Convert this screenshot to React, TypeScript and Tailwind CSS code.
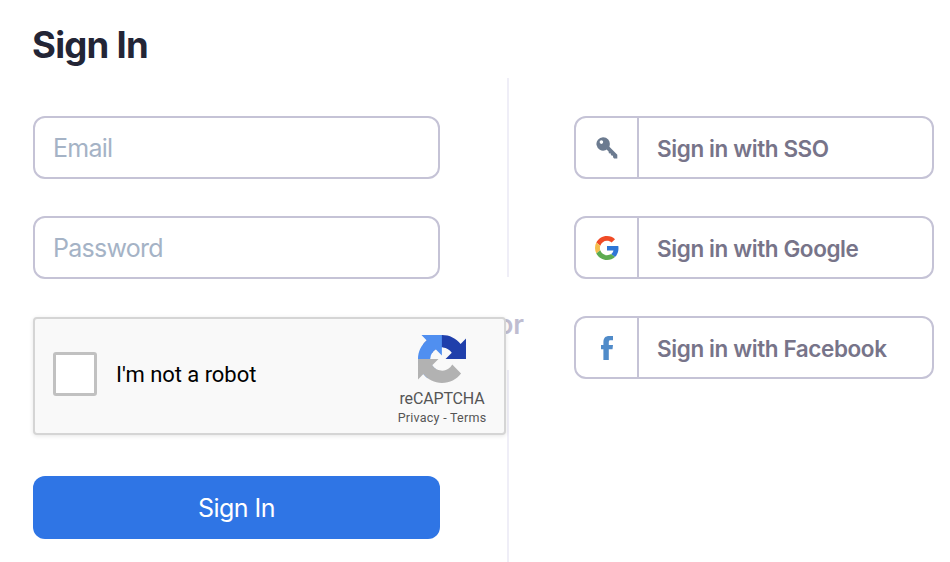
const KeyIcon = () => (
  <svg width="22" height="22" viewBox="0 0 22 22" fill="#6c7b90">
    <path
      fillRule="evenodd"
      d="M7 .2a6.7 6.7 0 1 0 2.4 13l1.2-.8 2 2 .3 1.8 1.8.3.3 1.8 1.9.4.3 1.8.9.9h3.2v-3.6l-7.9-8 .3-1.6A6.7 6.7 0 0 0 7 .2ZM5.4 3.3a1.8 1.8 0 1 1 0 3.6 1.8 1.8 0 0 1 0-3.6Z"
    />
  </svg>
)

const GoogleIcon = () => (
  <svg width="24" height="24" viewBox="0 0 48 48">
    <path fill="#f04b26" d="M24 9.5c3.54 0 6.71 1.22 9.21 3.6l6.85-6.85C35.9 2.38 30.47 0 24 0 14.62 0 6.51 5.38 2.56 13.22l7.98 6.19C12.43 13.72 17.74 9.5 24 9.5z" />
    <path fill="#2f76d6" d="M46.98 24.55c0-1.57-.15-3.09-.38-4.55H24v9.02h12.94c-.58 2.96-2.26 5.48-4.78 7.18l7.73 6c4.51-4.18 7.09-10.36 7.09-17.65z" />
    <path fill="#f5bd4b" d="M10.53 28.59c-.48-1.45-.76-2.99-.76-4.59s.27-3.14.76-4.59l-7.98-6.19C.92 16.46 0 20.12 0 24c0 3.88.92 7.54 2.56 10.78l7.97-6.19z" />
    <path fill="#5cab51" d="M24 48c6.48 0 11.93-2.13 15.89-5.81l-7.73-6c-2.15 1.45-4.92 2.3-8.16 2.3-6.26 0-11.57-4.22-13.47-9.91l-7.98 6.19C6.51 42.62 14.62 48 24 48z" />
  </svg>
)

const FacebookIcon = () => (
  <svg width="12" height="24" viewBox="0 0 12 24" fill="#508bc9">
    <path d="M2.4 24V13.2H0V9h2.4V6.2C2.4 2 4.3 0 8.3 0H12v4.2H9.7C8.1 4.2 7.8 4.8 7.8 6.3V9H12l-.5 4.2H7.8V24H2.4Z" />
  </svg>
)

const RecaptchaLogo = () => (
  <svg width="48" height="48" viewBox="0 0 64 64">
    <path fill="#1f3fab" d="M64 31.955l-.033-1.37V4.687l-7.16 7.16C50.948 4.674 42.033.093 32.05.093c-10.4 0-19.622 4.96-25.458 12.64l11.736 11.86a15.55 15.55 0 0 1 4.754-5.334c2.05-1.6 4.952-2.906 8.968-2.906.485 0 .86.057 1.135.163 4.976.393 9.288 3.14 11.828 7.124l-8.307 8.307L64 31.953" />
    <path fill="#508ff0" d="M31.862.094l-1.37.033H4.594l7.16 7.16C4.58 13.147 0 22.06 0 32.046c0 10.4 4.96 19.622 12.64 25.458L24.5 45.768a15.55 15.55 0 0 1-5.334-4.754c-1.6-2.05-2.906-4.952-2.906-8.968 0-.485.057-.86.163-1.135.393-4.976 3.14-9.288 7.124-11.828l8.307 8.307L31.86.095" />
    <path fill="#b2b2b2" d="M.001 32.045l.033 1.37v25.898l7.16-7.16c5.86 7.173 14.774 11.754 24.76 11.754 10.4 0 19.622-4.96 25.458-12.64l-11.736-11.86a15.55 15.55 0 0 1-4.754 5.334c-2.05 1.6-4.952 2.906-8.968 2.906-.485 0-.86-.057-1.135-.163-4.976-.393-9.288-3.14-11.828-7.124l8.307-8.307c-10.522.04-22.4.066-27.295-.005" />
  </svg>
)

const providers = [
  { name: 'SSO', icon: <KeyIcon /> },
  { name: 'Google', icon: <GoogleIcon /> },
  { name: 'Facebook', icon: <FacebookIcon /> },
]

const inputClass =
  'block h-[63px] w-full rounded-xl border-2 border-[#c5c3d6] bg-white px-[18px] text-[25px] tracking-[-0.75px] placeholder:text-[#a5b3c6] outline-none'

export default function App() {
  return (
    <div className="flex h-[562px] w-[950px] overflow-hidden bg-white pl-[33px] font-['Inter',sans-serif]">
      <form className="relative z-10 w-[407px] shrink-0 pt-[21px]" onSubmit={(e) => e.preventDefault()}>
        <h1 className="-ml-px mb-[47px] text-[36.5px] leading-[48px] font-bold tracking-[-0.75px] text-[#232536]">Sign In</h1>
        <div className="flex flex-col gap-[37px]">
          <input type="email" placeholder="Email" className={inputClass} />
          <input type="password" placeholder="Password" className={inputClass} />
        </div>

        <div className="mt-[38px] flex h-[118px] w-[473px] items-center rounded-[4px] border-2 border-[#d5d5d5] bg-[#f9f9f9] pl-[18px] font-['Roboto',sans-serif] shadow-[0_1px_4px_rgba(0,0,0,0.1)]">
          <button type="button" aria-label="I'm not a robot" className="mb-[4px] size-11 rounded-[3px] border-3 border-[#c1c1c1] bg-white" />
          <span className="mb-[4px] ml-[19px] text-[22px] tracking-[-0.05px] text-black">I'm not a robot</span>
          <div className="mr-[12px] ml-auto flex w-[100px] flex-col items-center pt-[8px] text-[#555]">
            <RecaptchaLogo />
            <span className="mt-[6px] text-[16px] leading-[20px] tracking-[-0.15px]">reCAPTCHA</span>
            <span className="text-[12.5px] leading-[17px] tracking-[0.25px] whitespace-nowrap">Privacy - Terms</span>
          </div>
        </div>

        <button type="submit" className="mt-[41px] h-[63px] w-full rounded-xl bg-[#2f75e5] pt-[2px] text-[25px] tracking-[-0.5px] text-white">
          Sign In
        </button>
      </form>

      <div className="flex w-[134px] shrink-0 flex-col items-center pt-[78px]">
        <div className="ml-px h-[199px] w-[2px] bg-[#efeef7]" />
        <span className="flex h-[93px] items-center pt-[3px] pl-[7px] text-[27px] font-semibold text-[#bfbdd1]">or</span>
        <div className="ml-px w-[2px] grow bg-[#efeef7]" />
      </div>

      <div className="flex w-[360px] shrink-0 flex-col gap-[37px] pt-[116px]">
        {providers.map((provider) => (
          <button
            key={provider.name}
            className="flex h-[63px] items-stretch rounded-xl border-2 border-[#c5c3d6] text-left text-[22.5px] font-semibold tracking-[-0.4px] text-[#777489]"
          >
            <span className="flex w-[63px] items-center justify-center border-r-2 border-[#c5c3d6]">{provider.icon}</span>
            <span className="flex items-center pt-[3px] pl-[18px]">Sign in with {provider.name}</span>
          </button>
        ))}
      </div>
    </div>
  )
}
